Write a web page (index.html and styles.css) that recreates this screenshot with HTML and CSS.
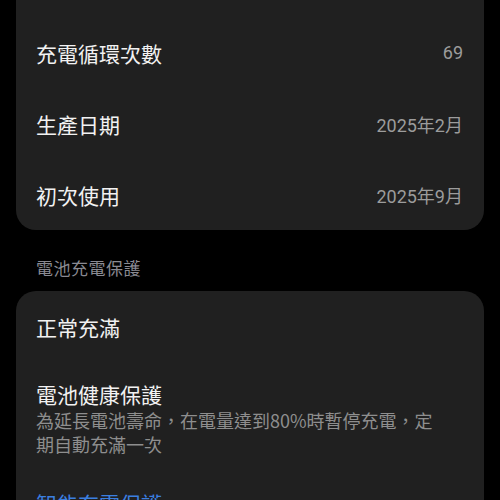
FILE: index.html
```html
<!DOCTYPE html>
<html lang="zh-Hant">
<head>
<meta charset="utf-8">
<link rel="stylesheet" href="styles.css">
</head>
<body>
<div class="page">
  <div class="card card-top">
    <div class="row">
      <span class="label">充電循環次數</span>
      <span class="value">69</span>
    </div>
    <div class="row">
      <span class="label">生產日期</span>
      <span class="value">2025年2月</span>
    </div>
    <div class="row">
      <span class="label">初次使用</span>
      <span class="value">2025年9月</span>
    </div>
  </div>

  <div class="section-title">電池充電保護</div>

  <div class="card">
    <div class="row">
      <span class="label">正常充滿</span>
    </div>
    <div class="item">
      <div class="label">電池健康保護</div>
      <div class="desc">為延長電池壽命，在電量達到80%時暫停充電，定期自動充滿一次</div>
    </div>
    <div class="item item-link">
      <div class="label link">智能充電保護</div>
    </div>
  </div>
</div>
</body>
</html>
```

FILE: styles.css
```css
html, body {
  margin: 0;
  padding: 0;
  background: #000;
}
body {
  width: 500px;
  height: 500px;
  overflow: hidden;
  font-family: "Noto Sans CJK TC", "Noto Sans CJK SC", sans-serif;
}
.page {
  padding: 0 16px;
}
.card {
  background: #202020;
  border-radius: 20px;
}
.card-top {
  border-radius: 0 0 20px 20px;
  padding-top: 17px;
}
.row {
  height: 71px;
  display: flex;
  align-items: center;
  justify-content: space-between;
  padding: 0 21px 0 20px;
  box-sizing: border-box;
}
.label {
  color: #f2f2f2;
  font-size: 21px;
  line-height: 26px;
}
.value {
  color: #9c9c9c;
  font-size: 18px;
  font-family: "Roboto", "Noto Sans CJK TC", sans-serif;
}
.section-title {
  color: #8a8a92;
  font-size: 17px;
  line-height: 24px;
  padding: 26px 20px 11px;
  letter-spacing: 0.5px;
}
.item {
  padding: 19px 21px 12px 20px;
}
.item-link {
  padding-top: 22px;
}
.desc {
  color: #8e8e8e;
  font-size: 18px;
  line-height: 24px;
  margin-top: 1px;
  padding-right: 20px;
}
.link {
  color: #3b7fe0;
}
```
